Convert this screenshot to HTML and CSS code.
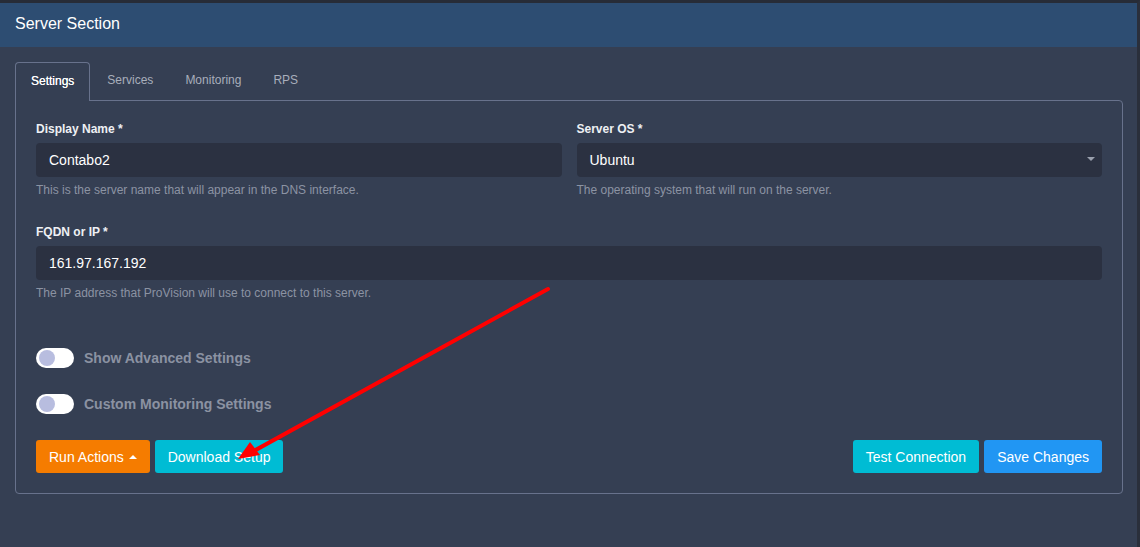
FILE: index.html
```html
<!DOCTYPE html>
<html>
<head>
<meta charset="utf-8">
<link rel="stylesheet" href="styles.css">
</head>
<body>
<div class="window">
  <div class="header">Server Section</div>
  <div class="content">
    <div class="tabs">
      <div class="tab active">Settings</div>
      <div class="tab">Services</div>
      <div class="tab">Monitoring</div>
      <div class="tab">RPS</div>
    </div>
    <div class="panel">
      <div class="grid">
        <div class="group">
          <label class="label">Display Name *</label>
          <div class="input">Contabo2</div>
          <div class="help">This is the server name that will appear in the DNS interface.</div>
        </div>
        <div class="group">
          <label class="label">Server OS *</label>
          <div class="input select">Ubuntu<span class="caret-down"></span></div>
          <div class="help">The operating system that will run on the server.</div>
        </div>
      </div>
      <div class="group">
        <label class="label">FQDN or IP *</label>
        <div class="input">161.97.167.192</div>
        <div class="help">The IP address that ProVision will use to connect to this server.</div>
      </div>
      <div class="toggles">
        <div class="toggle-row"><span class="switch"><span class="knob"></span></span><span class="toggle-label">Show Advanced Settings</span></div>
        <div class="toggle-row"><span class="switch"><span class="knob"></span></span><span class="toggle-label">Custom Monitoring Settings</span></div>
      </div>
      <div class="actions">
        <div class="btn-group">
          <button class="btn orange">Run Actions <span class="caret-up"></span></button>
          <button class="btn cyan">Download Setup</button>
        </div>
        <div class="btn-group">
          <button class="btn cyan">Test Connection</button>
          <button class="btn blue">Save Changes</button>
        </div>
      </div>
    </div>
  </div>
  <svg class="annotation" width="1140" height="547" viewBox="0 0 1140 547">
    <line x1="548" y1="289" x2="252" y2="452" stroke="#ff0000" stroke-width="4" stroke-linecap="round"/>
    <polygon points="238,459 250,442 260,455" fill="#ff0000"/>
  </svg>
</div>
</body>
</html>
```

FILE: styles.css
```css
* { box-sizing: border-box; }
html, body { margin: 0; padding: 0; }
body {
  background: #353f53;
  font-family: "Liberation Sans", Arial, sans-serif;
  width: 1140px;
  height: 547px;
  overflow: hidden;
}
.window {
  position: relative;
  height: 547px;
  border-top: 3px solid #272c37;
  border-right: 3px solid #2a2f3b;
  background: #353f53;
}
.header {
  height: 44px;
  background: #2d4d72;
  color: #ffffff;
  font-size: 16px;
  line-height: 41px;
  padding-left: 15px;
}
.content {
  padding: 15px 14px 0 15px;
}
.tabs {
  display: flex;
  height: 38px;
}
.tab {
  padding: 0 16px;
  font-size: 12px;
  line-height: 36px;
  color: #a8aebb;
}
.tab.active {
  color: #ffffff;
  border: 1px solid #68728c;
  border-bottom: none;
  border-radius: 4px 4px 0 0;
  background: #353f53;
  position: relative;
  z-index: 1;
  margin-bottom: -1px;
  margin-right: 1px;
  height: 39px;
  line-height: 35px;
  padding: 1px 15px 0 15px;
  text-shadow: 0 0 0.4px #ffffff;
}
.panel {
  border: 1px solid #68728c;
  border-radius: 0 4px 4px 4px;
  padding: 20px 20px 20px 20px;
}
.grid {
  display: grid;
  grid-template-columns: 1fr 1fr;
  column-gap: 15px;
}
.group {
  margin-bottom: 27px;
}
.label {
  display: block;
  font-size: 12px;
  font-weight: bold;
  color: #eef0f4;
  line-height: 16px;
  margin-bottom: 6px;
}
.input {
  position: relative;
  height: 34px;
  background: #2b3141;
  border-radius: 4px;
  color: #ffffff;
  font-size: 14px;
  line-height: 34px;
  padding-left: 13px;
}
.caret-down {
  position: absolute;
  right: 7px;
  top: 14px;
  width: 0;
  height: 0;
  border-left: 4px solid transparent;
  border-right: 4px solid transparent;
  border-top: 4px solid #9aa0ad;
}
.help {
  font-size: 12px;
  color: #8c93a3;
  line-height: 14px;
  margin-top: 6px;
}
.toggles {
  padding-top: 21px;
  display: flex;
  flex-direction: column;
  gap: 26px;
}
.toggle-row {
  display: flex;
  align-items: center;
  height: 20px;
}
.switch {
  position: relative;
  width: 38px;
  height: 20px;
  border-radius: 10px;
  background: #ffffff;
  flex: none;
}
.knob {
  position: absolute;
  left: 3px;
  top: 2px;
  width: 16px;
  height: 16px;
  border-radius: 50%;
  background: #b8bddf;
}
.toggle-label {
  margin-left: 10px;
  font-size: 14px;
  font-weight: bold;
  color: #8b92a2;
}
.actions {
  display: flex;
  justify-content: space-between;
  margin-top: 26px;
}
.btn-group {
  display: flex;
  gap: 5px;
}
.btn {
  height: 33px;
  border: none;
  border-radius: 3px;
  padding: 0 13px;
  font-family: "Liberation Sans", Arial, sans-serif;
  font-size: 14px;
  color: #ffffff;
  cursor: pointer;
  display: flex;
  align-items: center;
}
.btn.orange { background: #f57c00; }
.btn.cyan { background: #00bcd4; }
.btn.blue { background: #2196f3; }
.caret-up {
  display: inline-block;
  width: 0;
  height: 0;
  margin-left: 5px;
  border-left: 4px solid transparent;
  border-right: 4px solid transparent;
  border-bottom: 4px solid #ffffff;
}
.annotation {
  position: absolute;
  left: 0;
  top: -3px;
  pointer-events: none;
}
```
